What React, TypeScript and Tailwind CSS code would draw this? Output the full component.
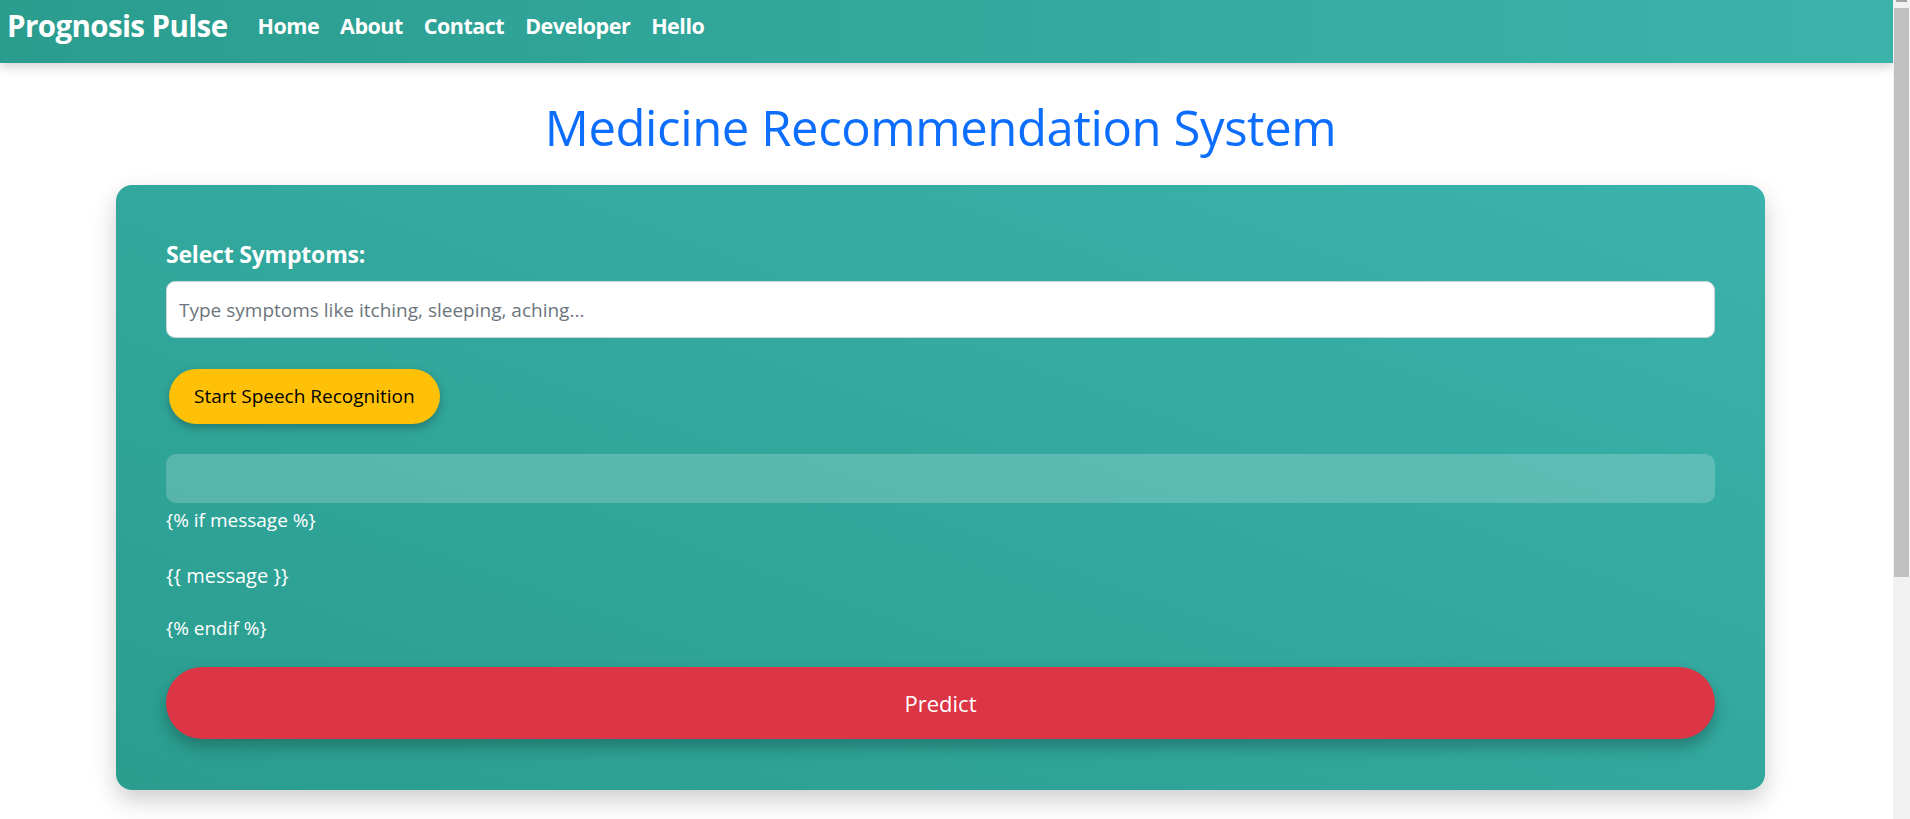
import React from "react";

export default function App() {
  return (
    <div className="h-[819px] flex overflow-hidden bg-white font-['Open_Sans','Noto_Sans',sans-serif]">
      <div className="flex-1 min-w-0">
        <nav className="h-[63px] flex items-center pb-[11px] pl-[7px] bg-linear-to-r from-[#2a9d8f] to-[#3bb3ab] shadow-[0_4px_10px_rgba(0,0,0,0.18)]">
          <span className="text-white font-bold text-[29.5px] tracking-[-0.6px] mr-[30px]">Prognosis Pulse</span>
          <div className="flex items-center gap-[21px] text-white font-bold text-[21.5px] tracking-[-0.5px]">
            <a>Home</a>
            <a>About</a>
            <a>Contact</a>
            <a>Developer</a>
            <a>Hello</a>
          </div>
        </nav>
        <div className="pl-[116px] pr-[128px]">
          <h1 className="mt-[33px] text-center text-[#0d6efd] text-[49px] font-medium leading-[62px] tracking-[-0.4px]">
            Medicine Recommendation System
          </h1>
          <div className="mt-[27px] rounded-[16px] bg-linear-to-tr from-[#2a9d8f] to-[#3ab2ab] shadow-[0_10px_25px_rgba(0,0,0,0.2)] pt-[56px] pb-[51px] px-[50px]">
            <label className="block text-white font-bold text-[23px] leading-[27px] tracking-[-0.2px] mb-[13px]">
              Select Symptoms:
            </label>
            <input
              className="block w-full h-[57px] rounded-[9px] bg-white border border-[#cfd4da] px-[12px] text-[19px] text-[#212529] placeholder:text-[#6c757d] outline-none"
              placeholder="Type symptoms like itching, sleeping, aching..."
            />
            <button className="mt-[31px] ml-[3px] h-[55px] px-[25px] rounded-full bg-[#ffc107] text-black text-[19px] shadow-[0_4px_8px_rgba(0,0,0,0.25)]">
              Start Speech Recognition
            </button>
            <div className="mt-[30px] h-[49px] rounded-[10px] bg-white/20"></div>
            <p className="mt-[5px] text-white text-[19px] leading-[24px]">{"{% if message %}"}</p>
            <p className="mt-[30px] text-white text-[20px] leading-[28px]">{"{{ message }}"}</p>
            <p className="mt-[26px] text-white text-[19px] leading-[24px]">{"{% endif %}"}</p>
            <button className="mt-[27px] w-full h-[72px] rounded-full bg-[#dc3545] text-white text-[22px] shadow-[0_8px_15px_rgba(0,0,0,0.25)]">
              Predict
            </button>
          </div>
        </div>
      </div>
      <div className="w-[17px] shrink-0 bg-[#f1f1f1] flex flex-col">
        <div className="h-[8px] flex items-start justify-center">
          <div className="w-[11px] h-[2px] bg-[#a3a3a3]"></div>
        </div>
        <div className="ml-[1px] mr-[1px] h-[569px] bg-[#c1c1c1]"></div>
      </div>
    </div>
  );
}
